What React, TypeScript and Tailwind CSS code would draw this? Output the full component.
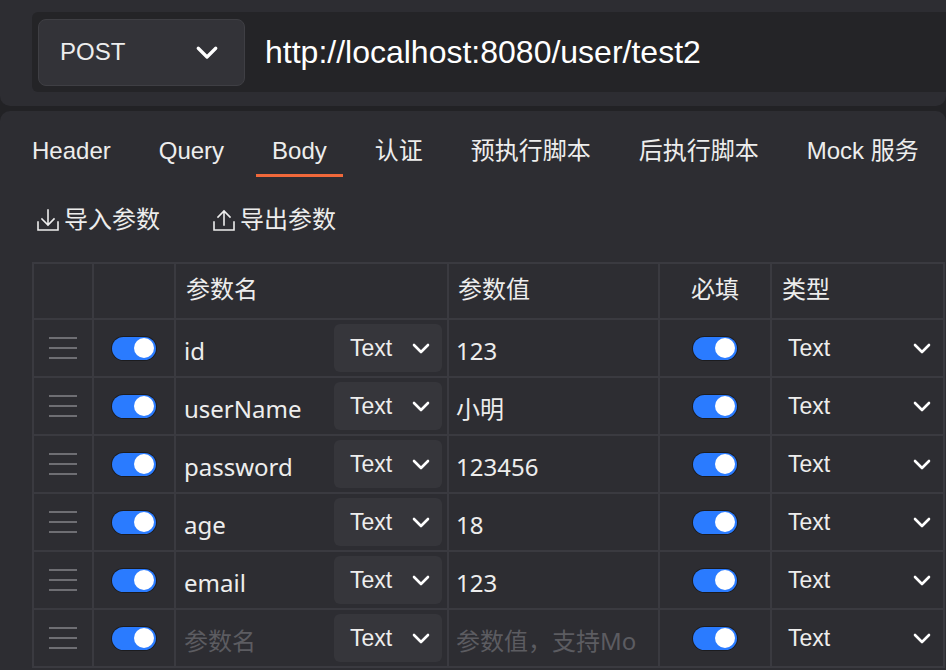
import React from "react";

const latin = { fontFamily: '"Liberation Sans", "Noto Sans CJK SC", sans-serif' };
const cell = { fontFamily: '"Noto Sans", "Noto Sans CJK SC", sans-serif' };

type Row = { name: string; value: string; placeholder?: boolean };

const rows: Row[] = [
  { name: "id", value: "123" },
  { name: "userName", value: "小明" },
  { name: "password", value: "123456" },
  { name: "age", value: "18" },
  { name: "email", value: "123" },
  { name: "参数名", value: "参数值，支持Mo", placeholder: true },
];

const tabs = ["Header", "Query", "Body", "认证", "预执行脚本", "后执行脚本", "Mock 服务"];

function Chevron({ className = "" }: { className?: string }) {
  return (
    <svg viewBox="0 0 24 24" className={className} fill="none" stroke="currentColor" strokeWidth={2.6} strokeLinecap="round" strokeLinejoin="round">
      <path d="M5 9l7 7 7-7" />
    </svg>
  );
}

function Toggle() {
  return (
    <div className="w-[44px] h-[23px] rounded-full bg-[#2a7bff] shadow-[0_0_0_1px_#1c1c1f] flex items-center justify-end pr-[2px]">
      <div className="w-[20px] h-[20px] rounded-full bg-white" />
    </div>
  );
}

function DragHandle() {
  return (
    <div className="flex flex-col gap-[8px]">
      <div className="w-[28px] h-[2px] bg-[#6e6e73]" />
      <div className="w-[28px] h-[2px] bg-[#6e6e73]" />
      <div className="w-[28px] h-[2px] bg-[#6e6e73]" />
    </div>
  );
}

function TrayIcon({ up }: { up?: boolean }) {
  return (
    <svg viewBox="0 0 24 24" className="w-[24px] h-[24px]" fill="none" stroke="currentColor" strokeWidth={1.6} strokeLinecap="square">
      <path d="M2 14v8h20v-8" />
      {up ? <path d="M12 17V3 M6 9l6-6 6 6" /> : <path d="M12 2v15 M6 11l6 6 6-6" />}
    </svg>
  );
}

const grid = "grid grid-cols-[60px_82px_273px_211px_112px_173px]";
const bd = "border-r-2 border-b-2 border-[#3a3a40]";

export default function App() {
  return (
    <div className="w-[946px] h-[670px] overflow-hidden bg-[#222225] text-[#ededed]" style={latin}>
      {/* request bar */}
      <div className="h-[106px] bg-[#2d2d32] rounded-b-[10px] pt-[12px] pl-[32px]">
        <div className="h-[80px] w-[940px] bg-[#242427] rounded-[6px] flex items-center pl-[6px]">
          <div className="w-[207px] h-[67px] bg-[#333338] border border-[#3f3f44] rounded-[8px] flex items-center justify-between pl-[21px] pr-[22px]">
            <span className="text-[24px]">POST</span>
            <Chevron className="w-[30px] h-[30px] text-white" />
          </div>
          <span className="ml-[20px] text-[32px] text-white">http://localhost:8080/user/test2</span>
        </div>
      </div>

      {/* body panel */}
      <div className="mt-[5px] h-[559px] bg-[#2d2d32] rounded-t-[10px] pt-[14px] pl-[16px]">
        <div className="flex gap-[16px]">
          {tabs.map((t) => (
            <div
              key={t}
              className={`px-[16px] pt-[10px] pb-[7px] leading-[32px] text-[24px] border-b-[3px] ${
                t === "Body" ? "border-[#f0683a]" : "border-transparent"
              }`}
              style={latin}
            >
              {t}
            </div>
          ))}
        </div>

        <div className="mt-[23px] h-[40px] flex items-center pl-[20px] text-[24px]">
          <div className="flex items-center gap-[4px]">
            <TrayIcon />
            <span>导入参数</span>
          </div>
          <div className="flex items-center gap-[4px] ml-[52px]">
            <TrayIcon up />
            <span>导出参数</span>
          </div>
        </div>

        {/* params table */}
        <div className="mt-[22px] ml-[16px] w-[913px] border-l-2 border-t-2 border-[#3a3a40]" style={cell}>
          <div className={`${grid} h-[56px] text-[24px]`}>
            <div className={bd} />
            <div className={bd} />
            <div className={`${bd} flex items-center pl-[10px] pb-[4px]`}>参数名</div>
            <div className={`${bd} flex items-center pl-[9px] pb-[4px]`}>参数值</div>
            <div className={`${bd} flex items-center justify-center pb-[4px]`}>必填</div>
            <div className={`${bd} flex items-center pl-[10px] pb-[4px]`}>类型</div>
          </div>
          {rows.map((r, i) => (
            <div key={i} className={`${grid} h-[58px] text-[24px]`}>
              <div className={`${bd} flex items-center justify-center`}>
                <DragHandle />
              </div>
              <div className={`${bd} flex items-center justify-center`}>
                <Toggle />
              </div>
              <div className={`${bd} flex items-center justify-between pl-[8px] pr-[5px]`}>
                <span className={`pt-[6px] ${r.placeholder ? "text-[#5c5c61]" : ""}`}>{r.name}</span>
                <div className="w-[108px] h-[48px] rounded-[6px] bg-[#36363b] flex items-center justify-between pl-[16px] pr-[9px]" style={latin}>
                  <span className="text-[23px]">Text</span>
                  <Chevron className="w-[24px] h-[24px] text-white" />
                </div>
              </div>
              <div className={`${bd} flex items-center pl-[7px] overflow-hidden whitespace-nowrap`}>
                <span className={`pt-[6px] ${r.placeholder ? "text-[#5c5c61]" : ""}`}>{r.value}</span>
              </div>
              <div className={`${bd} flex items-center justify-center`}>
                <Toggle />
              </div>
              <div className={`${bd} flex items-center justify-between pl-[16px] pr-[9px]`} style={latin}>
                <span className="text-[23px]">Text</span>
                <Chevron className="w-[24px] h-[24px] text-white" />
              </div>
            </div>
          ))}
        </div>
      </div>
    </div>
  );
}
